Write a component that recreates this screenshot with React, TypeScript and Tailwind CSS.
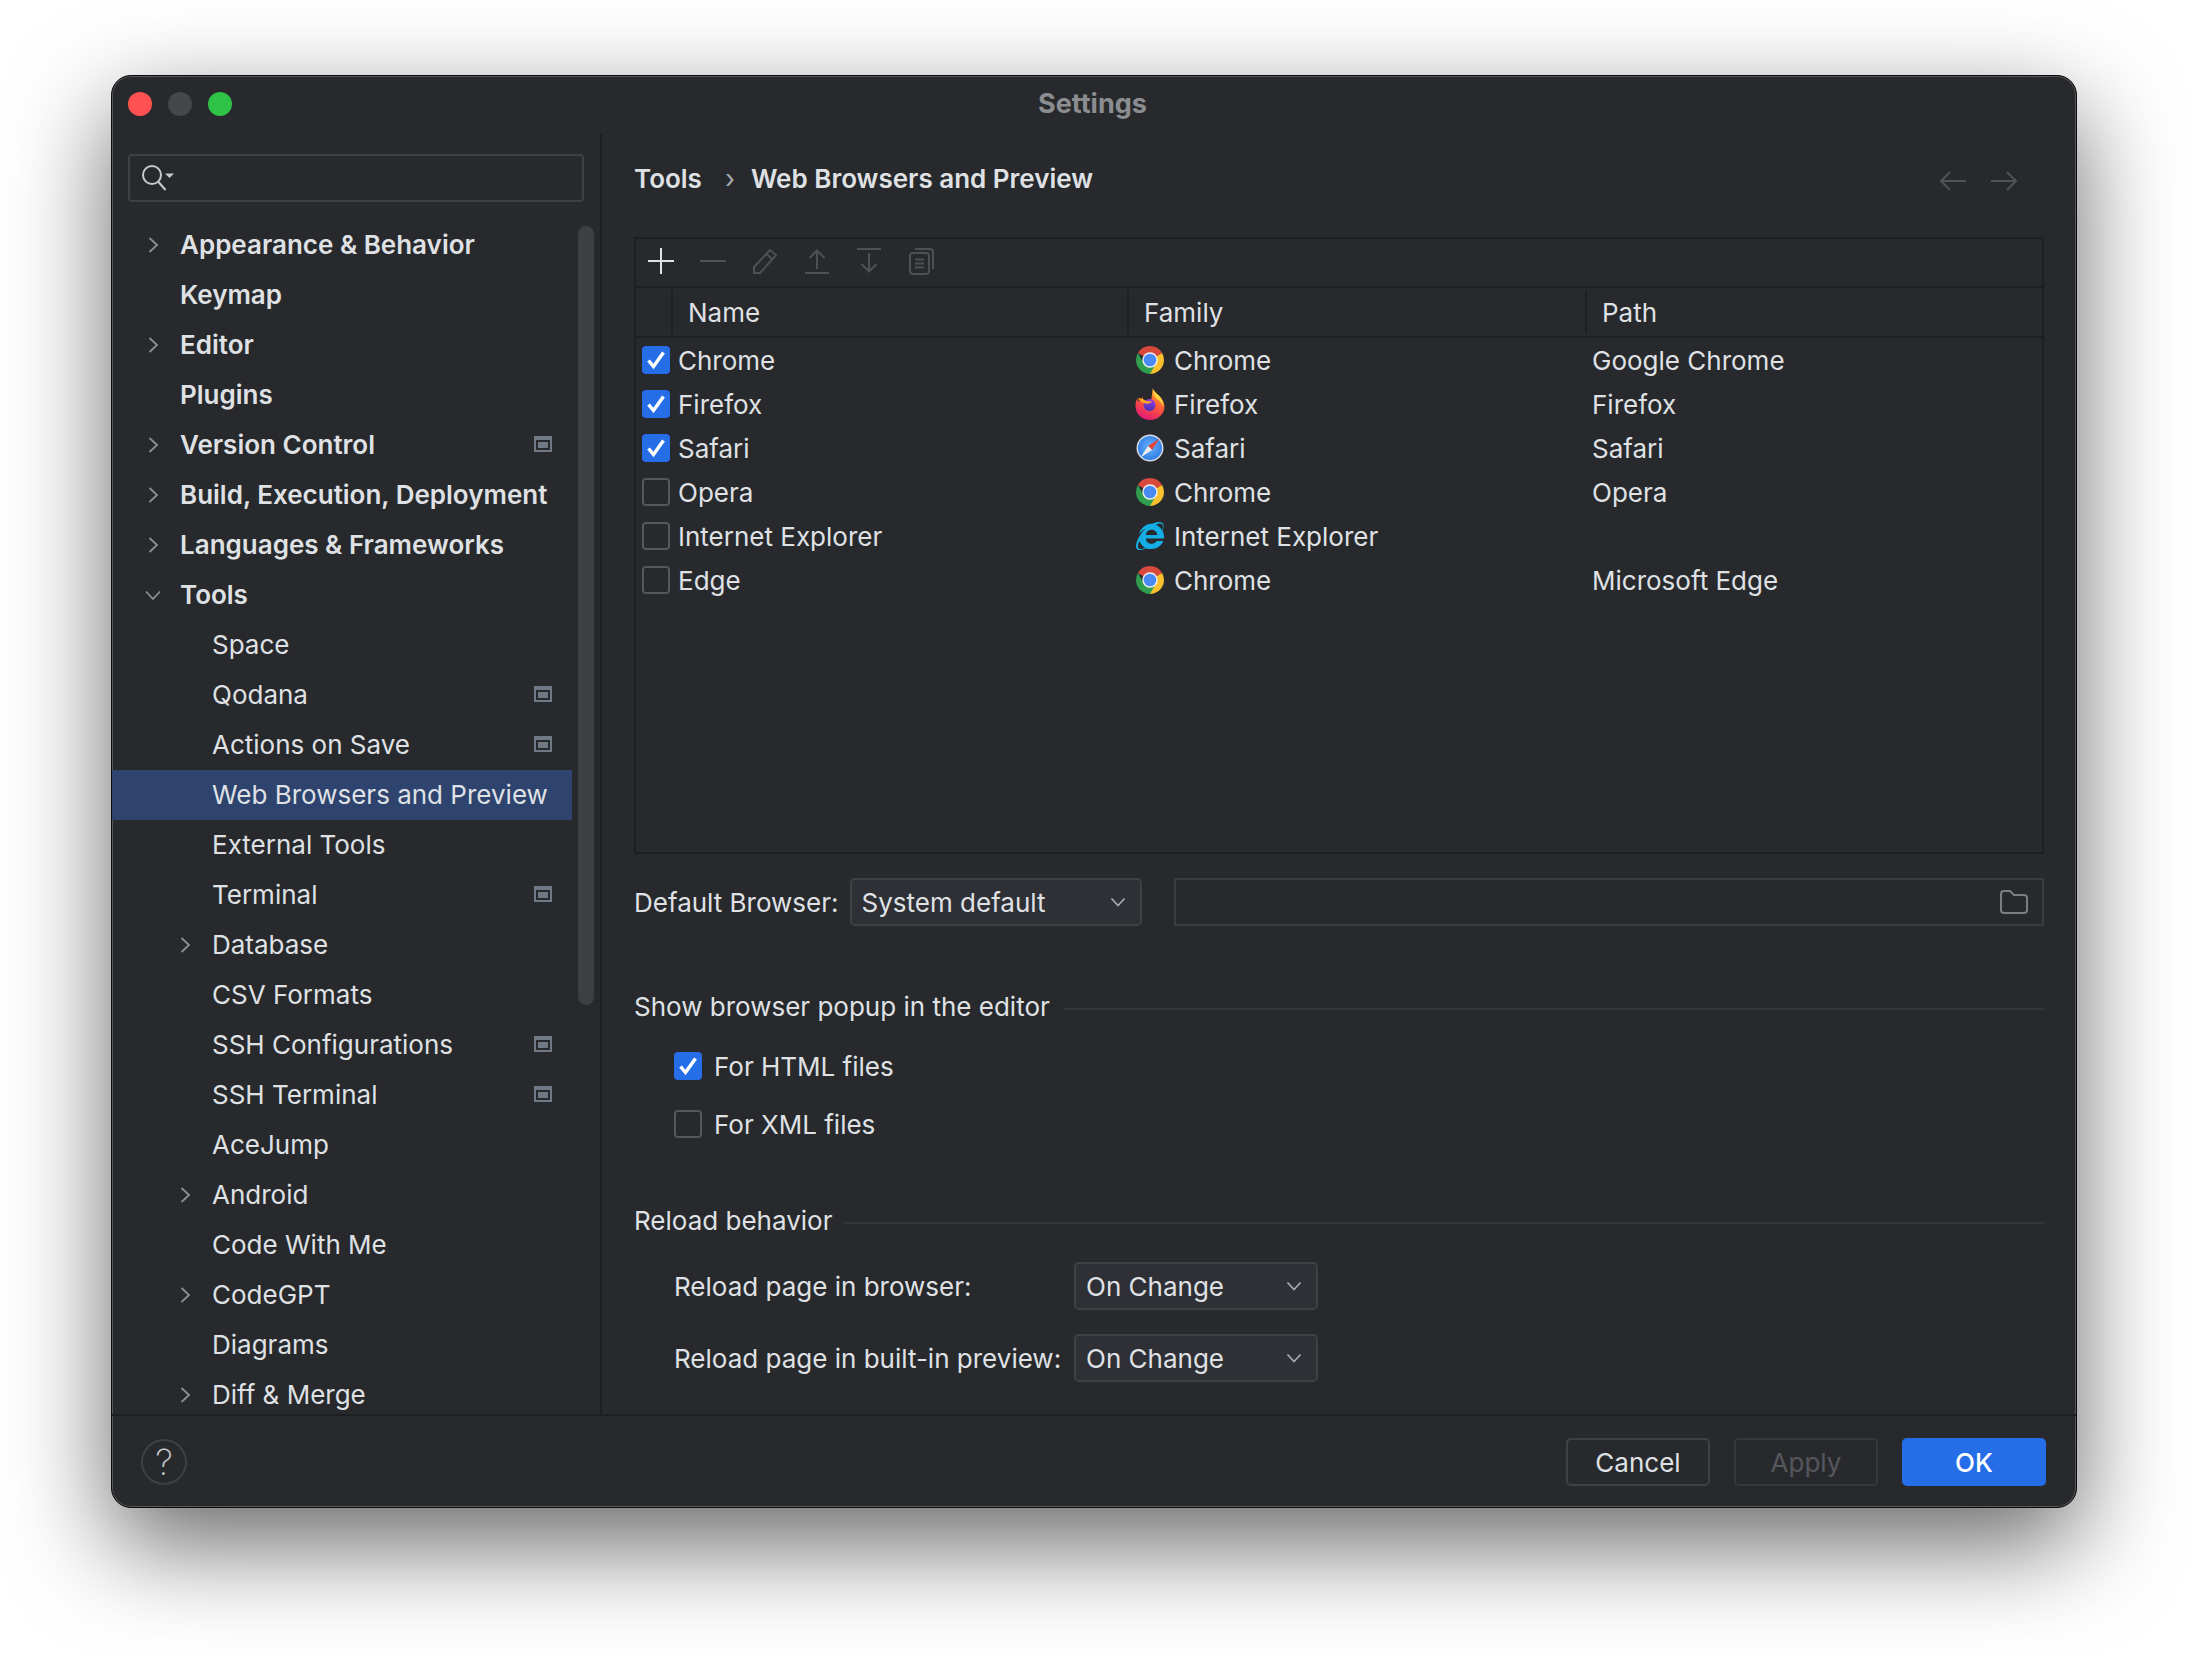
import { FaInternetExplorer } from 'react-icons/fa'

type NavItem = { name: string; level: 0 | 1; arrow?: 'right' | 'down'; badge?: boolean; selected?: boolean }

const navItems: NavItem[] = [
  { name: 'Appearance & Behavior', level: 0, arrow: 'right' },
  { name: 'Keymap', level: 0 },
  { name: 'Editor', level: 0, arrow: 'right' },
  { name: 'Plugins', level: 0 },
  { name: 'Version Control', level: 0, arrow: 'right', badge: true },
  { name: 'Build, Execution, Deployment', level: 0, arrow: 'right' },
  { name: 'Languages & Frameworks', level: 0, arrow: 'right' },
  { name: 'Tools', level: 0, arrow: 'down' },
  { name: 'Space', level: 1 },
  { name: 'Qodana', level: 1, badge: true },
  { name: 'Actions on Save', level: 1, badge: true },
  { name: 'Web Browsers and Preview', level: 1, selected: true },
  { name: 'External Tools', level: 1 },
  { name: 'Terminal', level: 1, badge: true },
  { name: 'Database', level: 1, arrow: 'right' },
  { name: 'CSV Formats', level: 1 },
  { name: 'SSH Configurations', level: 1, badge: true },
  { name: 'SSH Terminal', level: 1, badge: true },
  { name: 'AceJump', level: 1 },
  { name: 'Android', level: 1, arrow: 'right' },
  { name: 'Code With Me', level: 1 },
  { name: 'CodeGPT', level: 1, arrow: 'right' },
  { name: 'Diagrams', level: 1 },
  { name: 'Diff & Merge', level: 1, arrow: 'right' },
]

const browsers = [
  { name: 'Chrome', family: 'Chrome', path: 'Google Chrome', checked: true },
  { name: 'Firefox', family: 'Firefox', path: 'Firefox', checked: true },
  { name: 'Safari', family: 'Safari', path: 'Safari', checked: true },
  { name: 'Opera', family: 'Chrome', path: 'Opera', checked: false },
  { name: 'Internet Explorer', family: 'Internet Explorer', path: '', checked: false },
  { name: 'Edge', family: 'Chrome', path: 'Microsoft Edge', checked: false },
]

function Chevron({ dir }: { dir: 'right' | 'down' }) {
  return (
    <svg width="24" height="24" viewBox="0 0 24 24" fill="none" stroke="#8c8f95" strokeWidth="1.8">
      {dir === 'right' ? <path d="M8.5 5l7.5 7-7.5 7" /> : <path d="M5 8.5l7 7.5 7-7.5" />}
    </svg>
  )
}

function SmallChevron() {
  return (
    <svg width="18" height="18" viewBox="0 0 18 18" fill="none" stroke="#a8abb0" strokeWidth="1.7">
      <path d="M2.5 5.5L9 12.5l6.5-7" />
    </svg>
  )
}

function ProjectBadge() {
  return (
    <svg width="18" height="16" viewBox="0 0 18 16">
      <path fillRule="evenodd" d="M0 0h18v16H0z M2 4v10h14V4z" fill="#6f7a86" />
      <rect x="4" y="6" width="10" height="6" fill="#6f7a86" />
    </svg>
  )
}

function ChromeIcon() {
  return (
    <svg width="28" height="28" viewBox="4 4 40 40" className="shrink-0">
      <path d="M24 4A20 20 0 0 1 41.32 14L24 24 6.68 14A20 20 0 0 1 24 4z" fill="#d8493c" />
      <path d="M41.32 14A20 20 0 0 1 24 44L24 24z" fill="#fbc02d" />
      <path d="M6.68 14A20 20 0 0 0 24 44L32.66 29 15.34 29z" fill="#2f9e4f" />
      <circle cx="24" cy="24" r="11" fill="#f1f1f1" />
      <circle cx="24" cy="24" r="9" fill="#4a8af4" />
    </svg>
  )
}

function FirefoxIcon() {
  return (
    <svg width="30" height="32" viewBox="0 0 30 32" className="shrink-0 -ml-[1px] -mr-[1px]">
      <defs>
        <linearGradient id="ffBody" x1="0.7" y1="0" x2="0.3" y2="1">
          <stop offset="0" stopColor="#ffb02e" />
          <stop offset="0.5" stopColor="#ff5a36" />
          <stop offset="1" stopColor="#e3157c" />
        </linearGradient>
        <linearGradient id="ffGlobe" x1="0.5" y1="0" x2="0.5" y2="1">
          <stop offset="0" stopColor="#a43be0" />
          <stop offset="1" stopColor="#3f32b8" />
        </linearGradient>
      </defs>
      <path d="M18 1c1 3 5 5 8 9 2.500 3 3.500 6 3.500 8.500C29.500 26 23 32 15 32 7 32 .500 26 .500 18c0-3 .500-5.500 2-8 0 2 .500 3 1.500 4 .500-2 2-4 4-5-.500 2 0 3 1 4 2-1 5-1 7 0 1-4 1-9 2-14z" fill="url(#ffBody)" />
      <path d="M18 1c1 3 5 5 8 9 2 3 2.500 6 2 9-1-4-3-6-6-8-3-1.500-4-6-4-10z" fill="#ffd23f" />
      <circle cx="14.500" cy="17" r="6" fill="url(#ffGlobe)" />
      <path d="M3 10l5 1 3 2 6 .500c-2 2.500-6 2.500-8 1.500-3-1-5-2.500-6-5z" fill="#ffa51f" />
    </svg>
  )
}

function SafariIcon() {
  return (
    <svg width="28" height="28" viewBox="0 0 28 28" className="shrink-0">
      <defs>
        <radialGradient id="sfBlue" cx="0.5" cy="0.45" r="0.6">
          <stop offset="0" stopColor="#6ab4f8" />
          <stop offset="1" stopColor="#2a78e4" />
        </radialGradient>
      </defs>
      <circle cx="14" cy="14" r="13.500" fill="#d7dade" />
      <circle cx="14" cy="14" r="12" fill="url(#sfBlue)" />
      <path d="M23.500 4.500L12 12 16 16z" fill="#e8443a" />
      <path d="M4.500 23.500L12 12 16 16z" fill="#f1f1f1" />
    </svg>
  )
}

function FamilyIcon({ family }: { family: string }) {
  if (family === 'Firefox') return <FirefoxIcon />
  if (family === 'Safari') return <SafariIcon />
  if (family === 'Internet Explorer') return <FaInternetExplorer className="shrink-0 w-[28px] h-[28px] text-[#14aee6]" />
  return <ChromeIcon />
}

function Checkbox({ checked }: { checked: boolean }) {
  if (checked) {
    return (
      <span className="block w-[28px] h-[28px] shrink-0 rounded-[4px] bg-[#256ee8]">
        <svg width="28" height="28" viewBox="0 0 28 28" fill="none" stroke="#fff" strokeWidth="3.5">
          <path d="M6.500 14.500L11.500 20.500 21.500 6.500" />
        </svg>
      </span>
    )
  }
  return <span className="block w-[28px] h-[28px] shrink-0 rounded-[4px] border-2 border-[#55575c]" />
}

function Combo({ value, className }: { value: string; className: string }) {
  return (
    <div className={`flex h-[48px] items-center justify-between rounded-[5px] border-2 border-[#3e4046] bg-[#2f3036] pl-[10px] pr-[13px] ${className}`}>
      <span className="pt-[2px]">{value}</span>
      <SmallChevron />
    </div>
  )
}

function ToolIcon({ children }: { children: React.ReactNode }) {
  return (
    <svg width="28" height="28" viewBox="0 0 28 28" fill="none" stroke="#4e5055" strokeWidth="2">
      {children}
    </svg>
  )
}

export default function App() {
  return (
    <div className="h-[1656px] w-[2188px] overflow-hidden bg-white pl-[111px] pt-[75px] font-[Inter,sans-serif] text-[26px] leading-none text-[#dfe1e5]">
      {/* window */}
      <div className="flex h-[1433px] w-[1966px] flex-col overflow-hidden rounded-[20px] border border-[#0c0c0d] bg-[#28292c] shadow-[0_36px_100px_rgba(0,0,0,0.6),inset_0_0_0_1px_#55565a]">
        {/* title bar */}
        <div className="relative flex h-[58px] shrink-0 items-center pl-[16px]">
          <div className="mb-[2px] flex gap-[16px]">
            <span className="block h-[24px] w-[24px] rounded-full bg-[#ff5152]" />
            <span className="block h-[24px] w-[24px] rounded-full bg-[#46474a]" />
            <span className="block h-[24px] w-[24px] rounded-full bg-[#2ec247]" />
          </div>
          <span className="absolute left-[926px] top-[14px] text-[27px] font-bold text-[#8b8d91]">Settings</span>
        </div>

        <div className="flex h-[1280px] shrink-0">
          {/* sidebar */}
          <div className="relative w-[490px] shrink-0 overflow-hidden border-r-2 border-[#1e1f22]">
            <div className="ml-[16px] mt-[20px] flex h-[48px] w-[456px] items-center rounded-[4px] border-2 border-[#3e4046] pl-[11px]">
              <svg width="34" height="28" viewBox="0 0 34 28" fill="none" stroke="#c6c8cc" strokeWidth="2">
                <circle cx="11" cy="11" r="9" />
                <path d="M17.500 18l7 8" />
                <path d="M24 9.500h9l-4.500 4.500z" fill="#c6c8cc" stroke="none" />
              </svg>
            </div>
            <div className="mt-[18px] w-[460px]">
              {navItems.map((item) => (
                <div
                  key={item.name}
                  className={`flex h-[50px] items-center pr-[20px] ${item.level === 0 ? 'pl-[29px] font-semibold' : 'pl-[61px]'} ${item.selected ? 'bg-[#2e436e]' : ''}`}
                >
                  <span className="mr-[15px] flex h-[24px] w-[24px] shrink-0 items-center justify-center">
                    {item.arrow && <Chevron dir={item.arrow} />}
                  </span>
                  <span className="whitespace-nowrap">{item.name}</span>
                  {item.badge && (
                    <span className="mb-[2px] ml-auto flex">
                      <ProjectBadge />
                    </span>
                  )}
                </div>
              ))}
            </div>
            {/* overlay scrollbar */}
            <div className="absolute left-[466px] top-[92px] h-[779px] w-[16px] rounded-full bg-[#3d3f42]" />
          </div>

          {/* main pane */}
          <div className="w-[1441px] shrink-0 pl-[32px]">
            <div className="mt-[24px] flex h-[40px] items-center justify-between">
              <div className="flex items-center pt-[2px] font-semibold">
                <span>Tools</span>
                <span className="ml-[23px] mr-[16px] font-normal text-[#a8abb0]">›</span>
                <span>Web Browsers and Preview</span>
              </div>
              <div className="flex items-center gap-[23px] pr-[25px] pt-[6px]">
                <svg width="28" height="24" viewBox="0 0 28 24" fill="none" stroke="#505257" strokeWidth="2">
                  <path d="M27 12H2M11 3l-9 9 9 9" />
                </svg>
                <svg width="28" height="24" viewBox="0 0 28 24" fill="none" stroke="#505257" strokeWidth="2">
                  <path d="M1 12h25M17 3l9 9-9 9" />
                </svg>
              </div>
            </div>

            {/* browsers table */}
            <div className="mt-[39px] h-[617px] w-[1410px] border-2 border-[#1e1f22]">
              <div className="flex h-[49px] items-center gap-[24px] border-b-2 border-[#1e1f22] pb-[3px] pl-[11px]">
                <svg width="28" height="28" viewBox="0 0 28 28" fill="none" stroke="#dfe1e5" strokeWidth="2">
                  <path d="M14 1v26M1 14h26" />
                </svg>
                <ToolIcon>
                  <path d="M1 14h26" />
                </ToolIcon>
                <ToolIcon>
                  <path d="M3 26v-6L19 3l6 5L9 26z" />
                  <path d="M15.500 7l6 5.500" />
                </ToolIcon>
                <ToolIcon>
                  <path d="M2 26h24M14 22V4M6.500 11L14 3.500 21.500 11" />
                </ToolIcon>
                <ToolIcon>
                  <path d="M2 2h24M14 6v18M6.500 17l7.500 7.500 7.500-7.500" />
                </ToolIcon>
                <ToolIcon>
                  <rect x="3" y="6" width="19" height="21" rx="3" />
                  <path d="M8 2h15a3 3 0 0 1 3 3v17M8 12.500h9M8 16.500h9M8 20.500h9" />
                </ToolIcon>
              </div>
              <div className="flex h-[50px] items-center border-b-2 border-[#1e1f22]">
                <div className="h-[44px] w-[37px] shrink-0 border-r-2 border-[#1e1f22]" />
                <div className="flex h-[44px] w-[456px] shrink-0 items-center border-r-2 border-[#1e1f22] pl-[15px] pt-[2px]">Name</div>
                <div className="flex h-[44px] w-[458px] shrink-0 items-center border-r-2 border-[#1e1f22] pl-[15px] pt-[2px]">Family</div>
                <div className="pl-[15px] pt-[2px]">Path</div>
              </div>
              {browsers.map((b) => (
                <div key={b.name} className="flex h-[44px] items-center">
                  <div className="flex w-[493px] shrink-0 items-center pl-[6px]">
                    <Checkbox checked={b.checked} />
                    <span className="ml-[8px] pt-[2px]">{b.name}</span>
                  </div>
                  <div className="flex w-[457px] shrink-0 items-center gap-[10px] pl-[7px]">
                    <FamilyIcon family={b.family} />
                    <span className="pt-[2px]">{b.family}</span>
                  </div>
                  <div className="pl-[6px] pt-[2px]">{b.path}</div>
                </div>
              ))}
            </div>

            {/* default browser */}
            <div className="mt-[24px] flex h-[48px] w-[1410px] items-center">
              <span className="mr-[11px] pt-[2px]">Default Browser:</span>
              <Combo value="System default" className="w-[292px] shrink-0" />
              <div className="ml-[32px] flex h-[48px] flex-1 items-center justify-end border-2 border-[#3a3c40] pr-[13px]">
                <svg width="30" height="26" viewBox="0 0 30 26" fill="none" stroke="#7a7e85" strokeWidth="2">
                  <path d="M2 5a3 3 0 0 1 3-3h6l4 4h10a3 3 0 0 1 3 3v12a3 3 0 0 1-3 3H5a3 3 0 0 1-3-3z" />
                </svg>
              </div>
            </div>

            {/* popup section */}
            <div className="mt-[61px] flex h-[40px] w-[1410px] items-center gap-[14px]">
              <span>Show browser popup in the editor</span>
              <div className="mt-[4px] h-[2px] flex-1 bg-[#35373b]" />
            </div>
            <div className="mt-[17px] flex h-[44px] items-center gap-[12px] pl-[40px]">
              <Checkbox checked />
              <span className="pt-[2px]">For HTML files</span>
            </div>
            <div className="mt-[14px] flex h-[44px] items-center gap-[12px] pl-[40px]">
              <Checkbox checked={false} />
              <span className="pt-[2px]">For XML files</span>
            </div>

            {/* reload section */}
            <div className="mt-[55px] flex h-[40px] w-[1410px] items-center gap-[12px]">
              <span>Reload behavior</span>
              <div className="mt-[4px] h-[2px] flex-1 bg-[#35373b]" />
            </div>
            <div className="mt-[21px] flex items-center pl-[40px]">
              <span className="w-[400px] pt-[2px]">Reload page in browser:</span>
              <Combo value="On Change" className="w-[244px]" />
            </div>
            <div className="mt-[24px] flex items-center pl-[40px]">
              <span className="w-[400px] whitespace-nowrap pt-[2px]">Reload page in built-in preview:</span>
              <Combo value="On Change" className="w-[244px]" />
            </div>
          </div>
        </div>

        {/* footer */}
        <div className="flex flex-1 items-center justify-between border-t-2 border-[#1e1f22] pl-[29px] pr-[30px]">
          <div className="flex h-[46px] w-[46px] items-center justify-center rounded-full border-2 border-[#3e4046] text-[36px] font-extralight text-[#c6c8cc]">?</div>
          <div className="flex gap-[24px]">
            <div className="flex h-[48px] w-[144px] items-center justify-center rounded-[5px] border-2 border-[#3e4046] pt-[2px]">Cancel</div>
            <div className="flex h-[48px] w-[144px] items-center justify-center rounded-[5px] border-2 border-[#36383c] pt-[2px] text-[#55575c]">Apply</div>
            <div className="flex h-[48px] w-[144px] items-center justify-center rounded-[5px] bg-[#256ee8] pt-[2px] font-medium text-white">OK</div>
          </div>
        </div>
      </div>
    </div>
  )
}
